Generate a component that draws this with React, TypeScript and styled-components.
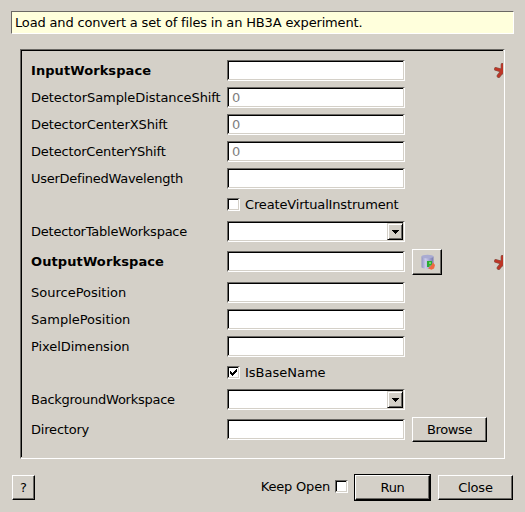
import React from "react";
import styled, { createGlobalStyle, css } from "styled-components";

const face = "#d4d0c8";
const shade = "#6a6864";

const Global = createGlobalStyle`
  * { box-sizing: border-box; }
  body { margin: 0; background: ${face}; overflow: hidden; }
  button, input { font: inherit; color: #000; border-radius: 0; }
`;

const Dialog = styled.div`
  display: flex;
  flex-direction: column;
  width: 525px;
  height: 512px;
  padding: 11px;
  background: ${face};
  color: #000;
  font: 13px "DejaVu Sans", sans-serif;
  white-space: nowrap;
`;

const Banner = styled.div`
  height: 23px;
  padding-left: 3px;
  border: 1px solid;
  border-color: ${shade} #fff #fff ${shade};
  background: #ffffdc;
  line-height: 21px;
  letter-spacing: -0.16px;
`;

const sunken = css`
  border: 1px solid;
  border-color: ${shade} #fff #fff ${shade};
  box-shadow: inset -1px -1px 0 ${face}, inset 1px 1px 0 #000;
`;

const raised = css`
  border: 1px solid;
  border-color: #fff #000 #000 #fff;
  box-shadow: inset -1px -1px 0 ${shade};
`;

const Frame = styled.section`
  ${sunken}
  display: flex;
  flex-direction: column;
  gap: 6px;
  width: 485px;
  height: 410px;
  margin: 15px 0 0 9px;
  padding: 10px 0 0 10px;
`;

const Row = styled.div`
  display: grid;
  grid-template-columns: 189px 178px 75px 9px;
  column-gap: 7px;
  align-items: center;
  flex: none;
  height: 21px;
`;

const CheckRow = styled(Row)`
  height: 20px;
  padding-bottom: 1px;
`;

const OutputRow = styled(Row)`
  height: 28px;
  padding-bottom: 1px;
`;

const BrowseRow = styled(Row)`
  height: 27px;
`;

const Label = styled.label<{ $bold?: boolean; $track?: number }>`
  font-weight: ${(p) => (p.$bold ? 700 : 400)};
  letter-spacing: ${(p) => p.$track ?? 0}px;
  line-height: 19px;
`;

const Input = styled.input`
  ${sunken}
  width: 178px;
  height: 21px;
  padding: 0 0 0 4px;
  background: #fff;
  outline: none;
  &::placeholder { color: #808080; opacity: 1; }
`;

const Combo = styled.div`
  ${sunken}
  display: flex;
  justify-content: flex-end;
  width: 178px;
  height: 21px;
  padding: 1px;
  background: #fff;
`;

const Arrow = styled.button`
  display: grid;
  place-items: center;
  width: 16px;
  height: 17px;
  padding: 0;
  background: ${face};
  border: 1px solid;
  border-color: ${face} #000 #000 ${face};
  box-shadow: inset 1px 1px 0 #fff, inset -1px -1px 0 ${shade};
`;

const Button = styled.button<{ $w?: number; $track?: number }>`
  ${raised}
  display: flex;
  align-items: center;
  justify-content: center;
  width: ${(p) => p.$w ?? 75}px;
  height: 25px;
  padding: 0;
  background: ${face};
  letter-spacing: ${(p) => p.$track ?? 0}px;
`;

const IconButton = styled(Button)`
  align-self: end;
  width: 30px;
  height: 26px;
  padding-left: 2px;
`;

const DefaultRing = styled.div`
  margin: 0 7px 0 6px;
  border: 1px solid #000;
`;

const Check = styled.label<{ $track?: number }>`
  grid-column: 2;
  display: flex;
  align-items: center;
  gap: 5px;
  letter-spacing: ${(p) => p.$track ?? 0}px;
`;

const Box = styled.span`
  ${sunken}
  display: grid;
  place-items: center;
  width: 13px;
  height: 13px;
  background: #fff;
`;

const Footer = styled.footer`
  display: flex;
  align-items: center;
  height: 27px;
  margin: 15px 1px 0;
`;

const KeepOpen = styled.label`
  display: flex;
  align-items: center;
  gap: 5px;
  margin: 0 0 2px auto;
  letter-spacing: -0.2px;
`;

const StarClip = styled.div<{ $drop?: boolean }>`
  grid-column: 4;
  width: 9px;
  height: 15px;
  margin-top: ${(p) => (p.$drop ? 2 : 0)}px;
  overflow: hidden;
`;

const arms = "M8.6 8V1.8M8.6 8L2 6M8.6 8L15 6M8.6 8L4.6 13M8.6 8L12.6 13";

const Star = ({ drop }: { drop?: boolean }) => (
  <StarClip $drop={drop}>
    <svg width="17" height="15" viewBox="0 0 17 15">
      <g strokeLinecap="round" fill="none">
        <path d={arms} stroke="#86584c" strokeWidth="3.9" />
        <path d={arms} stroke="#bd3526" strokeWidth="2.8" />
      </g>
    </svg>
  </StarClip>
);

const Database = () => (
  <svg width="16" height="16" viewBox="0 0 16 16">
    <defs>
      <linearGradient id="cyl">
        <stop offset="0" stopColor="#9293c0" />
        <stop offset=".35" stopColor="#cccdec" />
        <stop offset="1" stopColor="#7779b0" />
      </linearGradient>
    </defs>
    <path d="M1.5 2.5V13c0 2.3 12 2.3 12 0V2.5z" fill="url(#cyl)" />
    <ellipse cx="7.5" cy="2.6" rx="6" ry="1.8" fill="#a9abd2" />
    <path d="M7 7h5v4.5H9.5V13H7z" fill="#2cab34" />
    <path d="M9 8.2h2v1.6H9z" fill="#8be67c" />
    <path d="M13 8.4L15 11l-1 3.4-2.6 1.4-3.4-1.6 2.6-2z" fill="#f0683f" />
  </svg>
);

const Drop = () => (
  <Combo>
    <Arrow aria-label="Open list">
      <svg width="7" height="4" shapeRendering="crispEdges">
        <path d="M0 0h7v1H0zM1 1h5v1H1zM2 2h3v1H2zM3 3h1v1H3z" />
      </svg>
    </Arrow>
  </Combo>
);

const Tick = () => (
  <svg width="7" height="7" shapeRendering="crispEdges">
    <path d="M0 2h1v1h1v1h1v-1h1v-1h1v-1h1v-1h1v3h-1v1h-1v1h-1v1h-1v1h-1v-1h-1v-1h-1z" />
  </svg>
);

type FieldProps = { name: string; value?: string; bold?: boolean; track?: number };

const Field = ({ name, value, bold, track }: FieldProps) => (
  <Row>
    <Label $bold={bold} $track={track}>{name}</Label>
    <Input placeholder={value} aria-label={name} />
    {bold && <Star />}
  </Row>
);

export default function App() {
  return (
    <Dialog>
      <Global />
      <Banner>Load and convert a set of files in an HB3A experiment.</Banner>
      <Frame>
        <Field name="InputWorkspace" bold track={0.07} />
        <Field name="DetectorSampleDistanceShift" value="0" track={-0.08} />
        <Field name="DetectorCenterXShift" value="0" track={-0.12} />
        <Field name="DetectorCenterYShift" value="0" track={-0.16} />
        <Field name="UserDefinedWavelength" track={-0.26} />
        <CheckRow>
          <Check $track={-0.16}><Box />CreateVirtualInstrument</Check>
        </CheckRow>
        <Row>
          <Label $track={-0.24}>DetectorTableWorkspace</Label>
          <Drop />
        </Row>
        <OutputRow>
          <Label $bold $track={0.1}>OutputWorkspace</Label>
          <Input aria-label="OutputWorkspace" />
          <IconButton aria-label="Replace input"><Database /></IconButton>
          <Star drop />
        </OutputRow>
        <Field name="SourcePosition" />
        <Field name="SamplePosition" />
        <Field name="PixelDimension" track={-0.05} />
        <CheckRow>
          <Check><Box><Tick /></Box>IsBaseName</Check>
        </CheckRow>
        <Row>
          <Label $track={-0.25}>BackgroundWorkspace</Label>
          <Drop />
        </Row>
        <BrowseRow>
          <Label $track={-0.2}>Directory</Label>
          <Input aria-label="Directory" />
          <Button $track={-0.35}>Browse</Button>
        </BrowseRow>
      </Frame>
      <Footer>
        <Button $w={23}>?</Button>
        <KeepOpen>Keep Open<Box /></KeepOpen>
        <DefaultRing><Button $track={-0.3}>Run</Button></DefaultRing>
        <Button $track={-0.2}>Close</Button>
      </Footer>
    </Dialog>
  );
}
